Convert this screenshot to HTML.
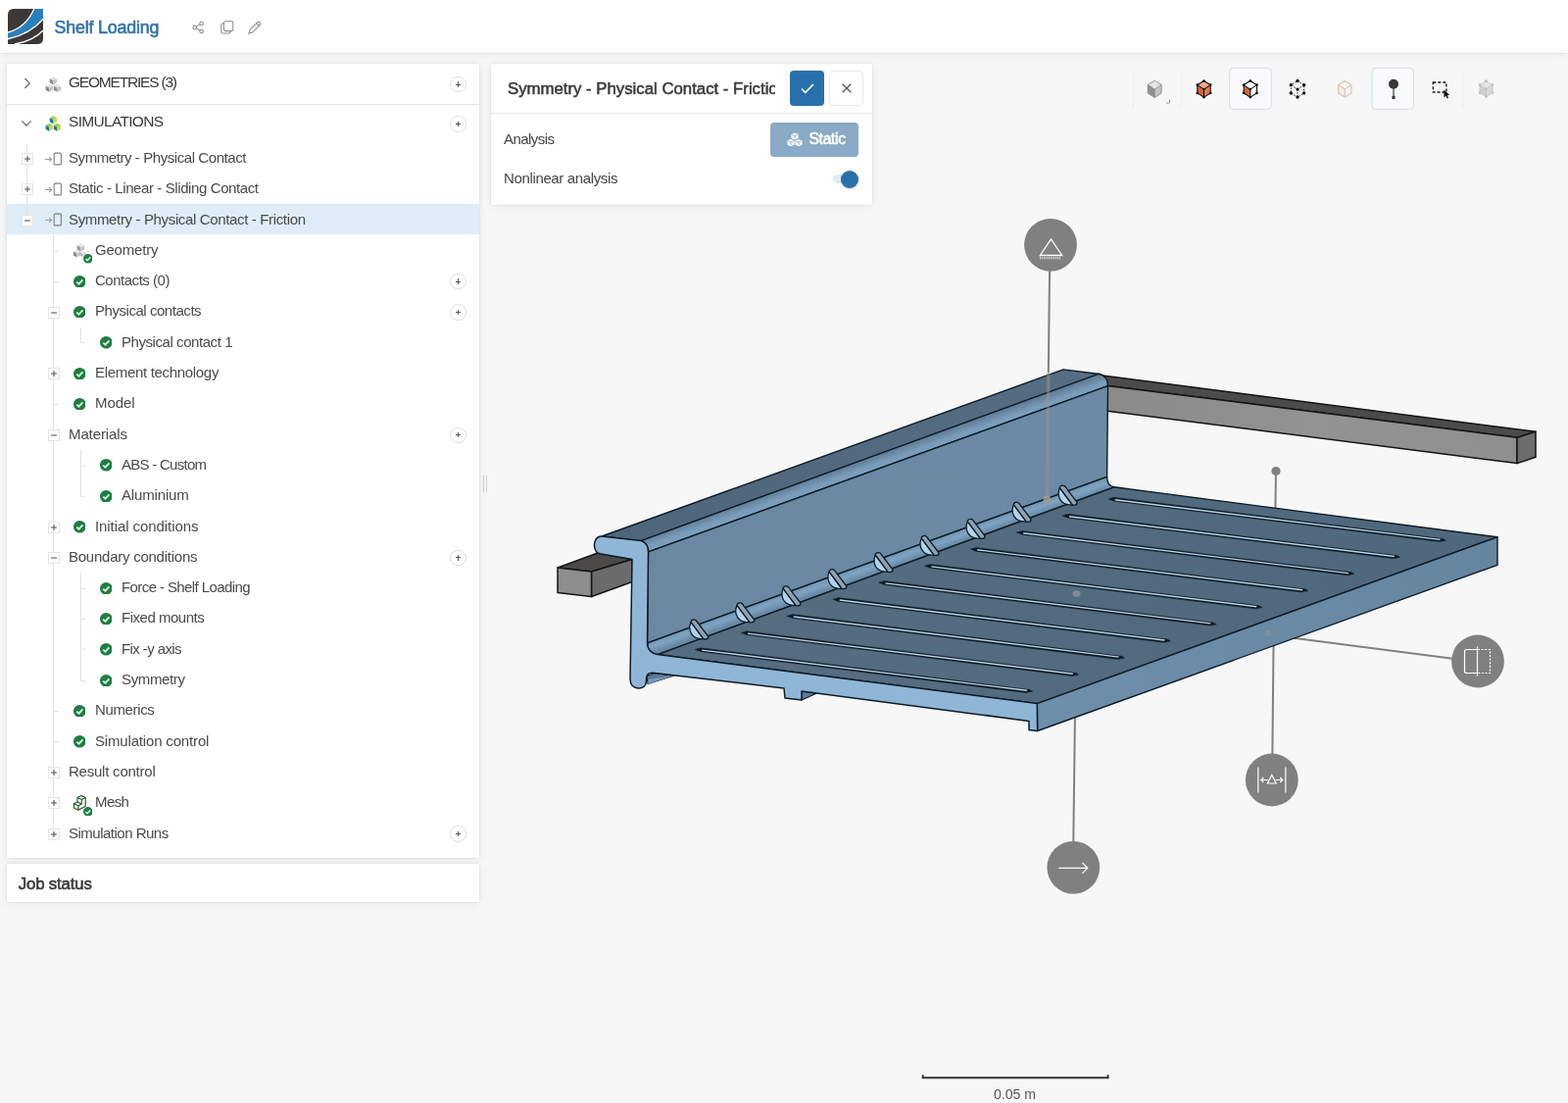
<!DOCTYPE html>
<html><head><meta charset="utf-8"><title>Shelf Loading</title>
<style>
html,body{margin:0;padding:0}
body{width:1600px;height:1125px;overflow:hidden;background:#f7f7f7;font-family:'Liberation Sans', sans-serif;position:relative}
.abs{position:absolute}
.panel{position:absolute;background:#fff;box-shadow:0 0 2px rgba(0,0,0,.13), 0 1px 10px rgba(0,0,0,.07)}
.plus{position:absolute;width:16.4px;height:16.4px;border:1px solid #dedede;border-radius:50%;background:#fff;box-sizing:border-box}
.plus:before{content:"";position:absolute;left:4.45px;top:6.6px;width:5.5px;height:1.2px;background:#555}
.plus:after{content:"";position:absolute;left:6.6px;top:4.45px;width:1.2px;height:5.5px;background:#555}
.exp{position:absolute;width:12px;height:12px;border:1px solid #e0e0e0;background:#fff;box-sizing:border-box;margin:-0.5px 0 0 -0.5px}
.exp:before{content:"";position:absolute;left:2.5px;top:4.25px;width:5px;height:1.5px;background:#555}
.exp.p:after{content:"";position:absolute;left:4.25px;top:2.5px;width:1.5px;height:5px;background:#555}
.tl{position:absolute;background:#e3e3e3}
</style></head>
<body>
<div id="app" style="position:absolute;left:0;top:0;width:1600px;height:1125px;will-change:transform">
<div class="abs" style="left:0;top:0;width:1600px;height:53.8px;background:#fff;box-shadow:0 0 2px rgba(0,0,0,.14), 0 1px 8px rgba(0,0,0,.07)"></div>
<svg class="abs" style="left:8.2px;top:9px" width="36" height="36" viewBox="0 0 36 36"><defs><clipPath id="lg"><path d="M6,0 H36 V30 Q36,36 30,36 H0 V6 Q0,0 6,0 Z"/></clipPath></defs><g clip-path="url(#lg)"><rect width="36" height="36" fill="#3b3836"/><path d="M0,24.6 C12,21.6 21.5,13.5 27.6,0 L36,0 L36,9.8 C27,20.5 14,27 0,30.2 Z" fill="#2a7fbf"/><path d="M0,24 C12,21 21,13 26.8,0" fill="none" stroke="#fff" stroke-width="1.3"/><path d="M0,30.8 C14,27.6 27,21 36,10.4" fill="none" stroke="#fff" stroke-width="1.4"/><path d="M7,36 C20,33.8 30,28.4 36,22" fill="none" stroke="#fff" stroke-width="1.3"/></g></svg>
<span style="position:absolute;left:55.6px;top:17.60px;line-height:20px;font-size:17.8px;font-weight:400;color:#3273a8;letter-spacing:-0.164px;white-space:pre;-webkit-text-stroke:0.6px #3273a8;">Shelf Loading</span>
<svg class="abs" style="left:196px;top:21.2px" width="13" height="14" viewBox="0 0 13 14" fill="none" stroke="#8a8a8a" stroke-width="1.05"><circle cx="2.8" cy="7" r="1.8"/><circle cx="9.6" cy="3" r="1.8"/><circle cx="9.6" cy="11" r="1.8"/><path d="M4.4 6.1 L8 3.9 M4.4 7.9 L8 10.1"/></svg><svg class="abs" style="left:224.6px;top:21.4px" width="14" height="14" viewBox="0 0 14 14" fill="none" stroke="#8a8a8a" stroke-width="1.05"><rect x="3.4" y="0.8" width="9.4" height="9.8" rx="1.6"/><path d="M3.4 3 H2.4 Q0.8 3 0.8 4.6 V11.4 Q0.8 13 2.4 13 H8.6 Q10 13 10.4 10.8"/></svg><svg class="abs" style="left:253.2px;top:21px" width="14" height="14" viewBox="0 0 14 14" fill="none" stroke="#8a8a8a" stroke-width="1.05"><path d="M1 13 L2 9.4 L9.8 1.6 Q10.8 0.6 11.8 1.6 L12.4 2.2 Q13.4 3.2 12.4 4.2 L4.6 12 Z"/><path d="M8.7 2.8 L11.2 5.3"/></svg>
<div class="panel" style="left:7px;top:65px;width:482.2px;height:810px"></div>
<div class="abs" style="left:7px;top:106px;width:482.2px;height:1px;background:#e6e6e6"></div>
<svg class="abs" style="left:23.6px;top:79.4px" width="8" height="12" viewBox="0 0 8 12" fill="none" stroke="#707070" stroke-width="1.3"><path d="M1.4 1 L6.2 6 L1.4 11"/></svg>
<svg class="abs" style="left:21.3px;top:121.7px" width="12" height="8" viewBox="0 0 12 8" fill="none" stroke="#707070" stroke-width="1.3"><path d="M1.4 1.4 L6 6.2 L10.6 1.4"/></svg>
<svg class="abs" style="left:45.6px;top:77.8px" width="17" height="17" viewBox="0 0 17 17"><polygon points="8.40,0.20 12.09,2.25 8.40,4.30 4.71,2.25" fill="#e3e3e5"/><polygon points="4.71,2.25 8.40,4.30 8.40,8.40 4.71,6.35" fill="#8e8e90"/><polygon points="8.40,4.30 12.09,2.25 12.09,6.35 8.40,8.40" fill="#c3c3c6"/><polygon points="4.30,7.70 7.99,9.75 4.30,11.80 0.61,9.75" fill="#e3e3e5"/><polygon points="0.61,9.75 4.30,11.80 4.30,15.90 0.61,13.85" fill="#8e8e90"/><polygon points="4.30,11.80 7.99,9.75 7.99,13.85 4.30,15.90" fill="#c3c3c6"/><polygon points="12.50,7.70 16.19,9.75 12.50,11.80 8.81,9.75" fill="#e3e3e5"/><polygon points="8.81,9.75 12.50,11.80 12.50,15.90 8.81,13.85" fill="#8e8e90"/><polygon points="12.50,11.80 16.19,9.75 16.19,13.85 12.50,15.90" fill="#c3c3c6"/></svg>
<svg class="abs" style="left:45.6px;top:117.6px" width="17" height="17" viewBox="0 0 17 17"><polygon points="8.40,0.20 12.09,2.25 8.40,4.30 4.71,2.25" fill="#9fd04a"/><polygon points="4.71,2.25 8.40,4.30 8.40,8.40 4.71,6.35" fill="#1f74a8"/><polygon points="8.40,4.30 12.09,2.25 12.09,6.35 8.40,8.40" fill="#cdd84c"/><polygon points="4.30,7.70 7.99,9.75 4.30,11.80 0.61,9.75" fill="#9fd04a"/><polygon points="0.61,9.75 4.30,11.80 4.30,15.90 0.61,13.85" fill="#1f74a8"/><polygon points="4.30,11.80 7.99,9.75 7.99,13.85 4.30,15.90" fill="#cdd84c"/><polygon points="12.50,7.70 16.19,9.75 12.50,11.80 8.81,9.75" fill="#9fd04a"/><polygon points="8.81,9.75 12.50,11.80 12.50,15.90 8.81,13.85" fill="#1f74a8"/><polygon points="12.50,11.80 16.19,9.75 16.19,13.85 12.50,15.90" fill="#cdd84c"/></svg>
<span style="position:absolute;left:70px;top:74.10px;line-height:20px;font-size:15.5px;font-weight:400;color:#383838;letter-spacing:-1.201px;white-space:pre;">GEOMETRIES (3)</span>
<span style="position:absolute;left:70px;top:114.10px;line-height:20px;font-size:15.5px;font-weight:400;color:#383838;letter-spacing:-0.692px;white-space:pre;">SIMULATIONS</span>
<div class="plus" style="left:459.20px;top:78.00px"></div>
<div class="plus" style="left:459.20px;top:118.20px"></div>
<div class="abs" style="left:7px;top:208.4px;width:482.2px;height:30.6px;background:#deedf7"></div>
<div class="tl" style="left:27.3px;top:147px;width:1px;height:72px"></div>
<div class="tl" style="left:54.3px;top:239px;width:1px;height:611px"></div>
<div class="tl" style="left:81.5px;top:333.8px;width:1px;height:16.6px"></div>
<div class="tl" style="left:81.5px;top:459.0px;width:1px;height:47.9px"></div>
<div class="tl" style="left:81.5px;top:584.1px;width:1px;height:110.6px"></div>
<svg class="abs" style="left:22.00px;top:156.00px" width="12" height="12" viewBox="0 0 12 12"><rect x="0.5" y="0.5" width="11" height="11" fill="#fff" stroke="#e5e5e5"/><path d="M3.1 6 H8.9" stroke="#505050" stroke-width="1.05"/><path d="M6 3.1 V8.9" stroke="#505050" stroke-width="1.05"/></svg>
<svg class="abs" style="left:44.5px;top:154.50px" width="20" height="14" viewBox="0 0 20 14" fill="none"><path d="M1 7.5 H7.5 M5.2 5.2 L7.6 7.5 L5.2 9.8" stroke="#9c9c9c" stroke-width="1.1"/><rect x="10.2" y="1.1" width="7.2" height="11.8" rx="1" stroke="#808080" stroke-width="1.1"/></svg>
<span style="position:absolute;left:70px;top:150.90px;line-height:20px;font-size:15px;font-weight:400;color:#4a4a4a;letter-spacing:-0.425px;white-space:pre;">Symmetry - Physical Contact</span>
<svg class="abs" style="left:22.00px;top:187.30px" width="12" height="12" viewBox="0 0 12 12"><rect x="0.5" y="0.5" width="11" height="11" fill="#fff" stroke="#e5e5e5"/><path d="M3.1 6 H8.9" stroke="#505050" stroke-width="1.05"/><path d="M6 3.1 V8.9" stroke="#505050" stroke-width="1.05"/></svg>
<svg class="abs" style="left:44.5px;top:185.80px" width="20" height="14" viewBox="0 0 20 14" fill="none"><path d="M1 7.5 H7.5 M5.2 5.2 L7.6 7.5 L5.2 9.8" stroke="#9c9c9c" stroke-width="1.1"/><rect x="10.2" y="1.1" width="7.2" height="11.8" rx="1" stroke="#808080" stroke-width="1.1"/></svg>
<span style="position:absolute;left:70px;top:182.20px;line-height:20px;font-size:15px;font-weight:400;color:#4a4a4a;letter-spacing:-0.399px;white-space:pre;">Static - Linear - Sliding Contact</span>
<svg class="abs" style="left:22.00px;top:218.60px" width="12" height="12" viewBox="0 0 12 12"><rect x="0.5" y="0.5" width="11" height="11" fill="#fff" stroke="#e5e5e5"/><path d="M3.1 6 H8.9" stroke="#505050" stroke-width="1.05"/></svg>
<svg class="abs" style="left:44.5px;top:217.10px" width="20" height="14" viewBox="0 0 20 14" fill="none"><path d="M1 7.5 H7.5 M5.2 5.2 L7.6 7.5 L5.2 9.8" stroke="#9c9c9c" stroke-width="1.1"/><rect x="10.2" y="1.1" width="7.2" height="11.8" rx="1" stroke="#808080" stroke-width="1.1"/></svg>
<span style="position:absolute;left:70px;top:213.50px;line-height:20px;font-size:15px;font-weight:400;color:#4a4a4a;letter-spacing:-0.353px;white-space:pre;">Symmetry - Physical Contact - Friction</span>
<div class="tl" style="left:55px;top:255.5px;width:5px;height:1px"></div>
<svg class="abs" style="left:74.20px;top:247.70px" width="14" height="16" viewBox="0 0 14 16"><polygon points="8.40,0.20 12.18,2.30 8.40,4.40 4.62,2.30" fill="#e6e6e8"/><polygon points="4.62,2.30 8.40,4.40 8.40,8.60 4.62,6.50" fill="#9a9a9d"/><polygon points="8.40,4.40 12.18,2.30 12.18,6.50 8.40,8.60" fill="#c6c6c9"/><polygon points="4.40,6.60 8.00,8.60 4.40,10.60 0.80,8.60" fill="#e6e6e8"/><polygon points="0.80,8.60 4.40,10.60 4.40,14.60 0.80,12.60" fill="#8c8c8f"/><polygon points="4.40,10.60 8.00,8.60 8.00,12.60 4.40,14.60" fill="#c9c9cc"/><polygon points="10.60,7.80 13.48,9.40 10.60,11.00 7.72,9.40" fill="#ececee"/><polygon points="7.72,9.40 10.60,11.00 10.60,14.20 7.72,12.60" fill="#b5b5b8"/><polygon points="10.60,11.00 13.48,9.40 13.48,12.60 10.60,14.20" fill="#d6d6d9"/></svg>
<svg class="abs" style="left:84.70px;top:259.10px" width="9.6" height="9.6" viewBox="0 0 14 14"><circle cx="7" cy="7" r="7" fill="#1f7d43"/><path d="M3.6 7.3 L6.1 9.7 L10.5 4.9" stroke="#d6f7df" stroke-width="2.1" fill="none"/></svg>
<span style="position:absolute;left:97px;top:244.80px;line-height:20px;font-size:15px;font-weight:400;color:#4a4a4a;letter-spacing:-0.194px;white-space:pre;">Geometry</span>
<div class="tl" style="left:55px;top:286.8px;width:5px;height:1px"></div>
<svg class="abs" style="left:74.70px;top:280.60px" width="12.6" height="12.6" viewBox="0 0 14 14"><circle cx="7" cy="7" r="7" fill="#1f7d43"/><path d="M3.6 7.3 L6.1 9.7 L10.5 4.9" stroke="#d6f7df" stroke-width="2.1" fill="none"/></svg>
<span style="position:absolute;left:97px;top:276.10px;line-height:20px;font-size:15px;font-weight:400;color:#4a4a4a;letter-spacing:-0.482px;white-space:pre;">Contacts (0)</span>
<div class="plus" style="left:459.20px;top:279.00px"></div>
<svg class="abs" style="left:49.00px;top:312.50px" width="12" height="12" viewBox="0 0 12 12"><rect x="0.5" y="0.5" width="11" height="11" fill="#fff" stroke="#e5e5e5"/><path d="M3.1 6 H8.9" stroke="#505050" stroke-width="1.05"/></svg>
<svg class="abs" style="left:74.70px;top:311.90px" width="12.6" height="12.6" viewBox="0 0 14 14"><circle cx="7" cy="7" r="7" fill="#1f7d43"/><path d="M3.6 7.3 L6.1 9.7 L10.5 4.9" stroke="#d6f7df" stroke-width="2.1" fill="none"/></svg>
<span style="position:absolute;left:97px;top:307.40px;line-height:20px;font-size:15px;font-weight:400;color:#4a4a4a;letter-spacing:-0.456px;white-space:pre;">Physical contacts</span>
<div class="plus" style="left:459.20px;top:310.30px"></div>
<div class="tl" style="left:82px;top:349.4px;width:5px;height:1px"></div>
<svg class="abs" style="left:101.50px;top:343.20px" width="12.6" height="12.6" viewBox="0 0 14 14"><circle cx="7" cy="7" r="7" fill="#1f7d43"/><path d="M3.6 7.3 L6.1 9.7 L10.5 4.9" stroke="#d6f7df" stroke-width="2.1" fill="none"/></svg>
<span style="position:absolute;left:124px;top:338.70px;line-height:20px;font-size:15px;font-weight:400;color:#4a4a4a;letter-spacing:-0.436px;white-space:pre;">Physical contact 1</span>
<svg class="abs" style="left:49.00px;top:375.10px" width="12" height="12" viewBox="0 0 12 12"><rect x="0.5" y="0.5" width="11" height="11" fill="#fff" stroke="#e5e5e5"/><path d="M3.1 6 H8.9" stroke="#505050" stroke-width="1.05"/><path d="M6 3.1 V8.9" stroke="#505050" stroke-width="1.05"/></svg>
<svg class="abs" style="left:74.70px;top:374.50px" width="12.6" height="12.6" viewBox="0 0 14 14"><circle cx="7" cy="7" r="7" fill="#1f7d43"/><path d="M3.6 7.3 L6.1 9.7 L10.5 4.9" stroke="#d6f7df" stroke-width="2.1" fill="none"/></svg>
<span style="position:absolute;left:97px;top:370.00px;line-height:20px;font-size:15px;font-weight:400;color:#4a4a4a;letter-spacing:-0.315px;white-space:pre;">Element technology</span>
<div class="tl" style="left:55px;top:412.0px;width:5px;height:1px"></div>
<svg class="abs" style="left:74.70px;top:405.80px" width="12.6" height="12.6" viewBox="0 0 14 14"><circle cx="7" cy="7" r="7" fill="#1f7d43"/><path d="M3.6 7.3 L6.1 9.7 L10.5 4.9" stroke="#d6f7df" stroke-width="2.1" fill="none"/></svg>
<span style="position:absolute;left:97px;top:401.30px;line-height:20px;font-size:15px;font-weight:400;color:#4a4a4a;letter-spacing:-0.090px;white-space:pre;">Model</span>
<svg class="abs" style="left:49.00px;top:437.70px" width="12" height="12" viewBox="0 0 12 12"><rect x="0.5" y="0.5" width="11" height="11" fill="#fff" stroke="#e5e5e5"/><path d="M3.1 6 H8.9" stroke="#505050" stroke-width="1.05"/></svg>
<span style="position:absolute;left:70px;top:432.60px;line-height:20px;font-size:15px;font-weight:400;color:#4a4a4a;letter-spacing:-0.107px;white-space:pre;">Materials</span>
<div class="plus" style="left:459.20px;top:435.50px"></div>
<div class="tl" style="left:82px;top:474.6px;width:5px;height:1px"></div>
<svg class="abs" style="left:101.50px;top:468.40px" width="12.6" height="12.6" viewBox="0 0 14 14"><circle cx="7" cy="7" r="7" fill="#1f7d43"/><path d="M3.6 7.3 L6.1 9.7 L10.5 4.9" stroke="#d6f7df" stroke-width="2.1" fill="none"/></svg>
<span style="position:absolute;left:124px;top:463.90px;line-height:20px;font-size:15px;font-weight:400;color:#4a4a4a;letter-spacing:-0.730px;white-space:pre;">ABS - Custom</span>
<div class="tl" style="left:82px;top:505.9px;width:5px;height:1px"></div>
<svg class="abs" style="left:101.50px;top:499.70px" width="12.6" height="12.6" viewBox="0 0 14 14"><circle cx="7" cy="7" r="7" fill="#1f7d43"/><path d="M3.6 7.3 L6.1 9.7 L10.5 4.9" stroke="#d6f7df" stroke-width="2.1" fill="none"/></svg>
<span style="position:absolute;left:124px;top:495.20px;line-height:20px;font-size:15px;font-weight:400;color:#4a4a4a;letter-spacing:-0.154px;white-space:pre;">Aluminium</span>
<svg class="abs" style="left:49.00px;top:531.60px" width="12" height="12" viewBox="0 0 12 12"><rect x="0.5" y="0.5" width="11" height="11" fill="#fff" stroke="#e5e5e5"/><path d="M3.1 6 H8.9" stroke="#505050" stroke-width="1.05"/><path d="M6 3.1 V8.9" stroke="#505050" stroke-width="1.05"/></svg>
<svg class="abs" style="left:74.70px;top:531.00px" width="12.6" height="12.6" viewBox="0 0 14 14"><circle cx="7" cy="7" r="7" fill="#1f7d43"/><path d="M3.6 7.3 L6.1 9.7 L10.5 4.9" stroke="#d6f7df" stroke-width="2.1" fill="none"/></svg>
<span style="position:absolute;left:97px;top:526.50px;line-height:20px;font-size:15px;font-weight:400;color:#4a4a4a;letter-spacing:-0.073px;white-space:pre;">Initial conditions</span>
<svg class="abs" style="left:49.00px;top:562.90px" width="12" height="12" viewBox="0 0 12 12"><rect x="0.5" y="0.5" width="11" height="11" fill="#fff" stroke="#e5e5e5"/><path d="M3.1 6 H8.9" stroke="#505050" stroke-width="1.05"/></svg>
<span style="position:absolute;left:70px;top:557.80px;line-height:20px;font-size:15px;font-weight:400;color:#4a4a4a;letter-spacing:-0.247px;white-space:pre;">Boundary conditions</span>
<div class="plus" style="left:459.20px;top:560.70px"></div>
<div class="tl" style="left:82px;top:599.8px;width:5px;height:1px"></div>
<svg class="abs" style="left:101.50px;top:593.60px" width="12.6" height="12.6" viewBox="0 0 14 14"><circle cx="7" cy="7" r="7" fill="#1f7d43"/><path d="M3.6 7.3 L6.1 9.7 L10.5 4.9" stroke="#d6f7df" stroke-width="2.1" fill="none"/></svg>
<span style="position:absolute;left:124px;top:589.10px;line-height:20px;font-size:15px;font-weight:400;color:#4a4a4a;letter-spacing:-0.591px;white-space:pre;">Force - Shelf Loading</span>
<div class="tl" style="left:82px;top:631.1px;width:5px;height:1px"></div>
<svg class="abs" style="left:101.50px;top:624.90px" width="12.6" height="12.6" viewBox="0 0 14 14"><circle cx="7" cy="7" r="7" fill="#1f7d43"/><path d="M3.6 7.3 L6.1 9.7 L10.5 4.9" stroke="#d6f7df" stroke-width="2.1" fill="none"/></svg>
<span style="position:absolute;left:124px;top:620.40px;line-height:20px;font-size:15px;font-weight:400;color:#4a4a4a;letter-spacing:-0.477px;white-space:pre;">Fixed mounts</span>
<div class="tl" style="left:82px;top:662.4px;width:5px;height:1px"></div>
<svg class="abs" style="left:101.50px;top:656.20px" width="12.6" height="12.6" viewBox="0 0 14 14"><circle cx="7" cy="7" r="7" fill="#1f7d43"/><path d="M3.6 7.3 L6.1 9.7 L10.5 4.9" stroke="#d6f7df" stroke-width="2.1" fill="none"/></svg>
<span style="position:absolute;left:124px;top:651.70px;line-height:20px;font-size:15px;font-weight:400;color:#4a4a4a;letter-spacing:-0.590px;white-space:pre;">Fix -y axis</span>
<div class="tl" style="left:82px;top:693.7px;width:5px;height:1px"></div>
<svg class="abs" style="left:101.50px;top:687.50px" width="12.6" height="12.6" viewBox="0 0 14 14"><circle cx="7" cy="7" r="7" fill="#1f7d43"/><path d="M3.6 7.3 L6.1 9.7 L10.5 4.9" stroke="#d6f7df" stroke-width="2.1" fill="none"/></svg>
<span style="position:absolute;left:124px;top:683.00px;line-height:20px;font-size:15px;font-weight:400;color:#4a4a4a;letter-spacing:-0.357px;white-space:pre;">Symmetry</span>
<div class="tl" style="left:55px;top:725.0px;width:5px;height:1px"></div>
<svg class="abs" style="left:74.70px;top:718.80px" width="12.6" height="12.6" viewBox="0 0 14 14"><circle cx="7" cy="7" r="7" fill="#1f7d43"/><path d="M3.6 7.3 L6.1 9.7 L10.5 4.9" stroke="#d6f7df" stroke-width="2.1" fill="none"/></svg>
<span style="position:absolute;left:97px;top:714.30px;line-height:20px;font-size:15px;font-weight:400;color:#4a4a4a;letter-spacing:-0.363px;white-space:pre;">Numerics</span>
<div class="tl" style="left:55px;top:756.3px;width:5px;height:1px"></div>
<svg class="abs" style="left:74.70px;top:750.10px" width="12.6" height="12.6" viewBox="0 0 14 14"><circle cx="7" cy="7" r="7" fill="#1f7d43"/><path d="M3.6 7.3 L6.1 9.7 L10.5 4.9" stroke="#d6f7df" stroke-width="2.1" fill="none"/></svg>
<span style="position:absolute;left:97px;top:745.60px;line-height:20px;font-size:15px;font-weight:400;color:#4a4a4a;letter-spacing:-0.167px;white-space:pre;">Simulation control</span>
<svg class="abs" style="left:49.00px;top:782.00px" width="12" height="12" viewBox="0 0 12 12"><rect x="0.5" y="0.5" width="11" height="11" fill="#fff" stroke="#e5e5e5"/><path d="M3.1 6 H8.9" stroke="#505050" stroke-width="1.05"/><path d="M6 3.1 V8.9" stroke="#505050" stroke-width="1.05"/></svg>
<span style="position:absolute;left:70px;top:776.90px;line-height:20px;font-size:15px;font-weight:400;color:#4a4a4a;letter-spacing:-0.225px;white-space:pre;">Result control</span>
<svg class="abs" style="left:49.00px;top:813.30px" width="12" height="12" viewBox="0 0 12 12"><rect x="0.5" y="0.5" width="11" height="11" fill="#fff" stroke="#e5e5e5"/><path d="M3.1 6 H8.9" stroke="#505050" stroke-width="1.05"/><path d="M6 3.1 V8.9" stroke="#505050" stroke-width="1.05"/></svg>
<svg class="abs" style="left:74.20px;top:811.10px" width="15" height="17" viewBox="0 0 15 17" fill="none" stroke="#1c5a2e" stroke-width="1.15" stroke-linejoin="round"><path d="M9,0.6 L13.2,2.6 L13.2,11.2 L5.9,15.2 L1.4,13 L1.4,8.8 L5,7 L5,2.6 Z" fill="#fff"/><path d="M5,2.6 L9.3,4.6 L13.2,2.6 M9.3,4.6 L9.3,9 L5.9,10.9 L1.4,8.8 M5.9,10.9 L5.9,15.2 M5,7 L9.3,9"/></svg>
<svg class="abs" style="left:84.70px;top:822.70px" width="9.6" height="9.6" viewBox="0 0 14 14"><circle cx="7" cy="7" r="7" fill="#1f7d43"/><path d="M3.6 7.3 L6.1 9.7 L10.5 4.9" stroke="#d6f7df" stroke-width="2.1" fill="none"/></svg>
<span style="position:absolute;left:97px;top:808.20px;line-height:20px;font-size:15px;font-weight:400;color:#4a4a4a;letter-spacing:-0.596px;white-space:pre;">Mesh</span>
<svg class="abs" style="left:49.00px;top:844.60px" width="12" height="12" viewBox="0 0 12 12"><rect x="0.5" y="0.5" width="11" height="11" fill="#fff" stroke="#e5e5e5"/><path d="M3.1 6 H8.9" stroke="#505050" stroke-width="1.05"/><path d="M6 3.1 V8.9" stroke="#505050" stroke-width="1.05"/></svg>
<span style="position:absolute;left:70px;top:839.50px;line-height:20px;font-size:15px;font-weight:400;color:#4a4a4a;letter-spacing:-0.501px;white-space:pre;">Simulation Runs</span>
<div class="plus" style="left:459.20px;top:842.40px"></div>
<div class="abs" style="left:493px;top:485px;width:1px;height:17px;background:#cfcfcf"></div><div class="abs" style="left:495.5px;top:485px;width:1px;height:17px;background:#cfcfcf"></div>
<div class="panel" style="left:7px;top:881px;width:482.2px;height:39px"></div>
<span style="position:absolute;left:18.8px;top:892.20px;line-height:20px;font-size:16.8px;font-weight:400;color:#3a3a3a;letter-spacing:-0.167px;white-space:pre;-webkit-text-stroke:0.6px #3a3a3a;">Job status</span>
<div class="panel" style="left:500.6px;top:65px;width:389.4px;height:144px"></div>
<div class="abs" style="left:500.6px;top:115px;width:389.4px;height:1px;background:#e8e8e8"></div>
<div class="abs" style="left:518px;top:76px;width:272.6px;height:30px;overflow:hidden"><span style="position:absolute;left:0px;top:5.20px;line-height:20px;font-size:16.8px;font-weight:400;color:#3a3a3a;letter-spacing:-0.009px;white-space:pre;-webkit-text-stroke:0.55px #3a3a3a;">Symmetry - Physical Contact - Friction</span></div>
<div class="abs" style="left:806px;top:72px;width:35px;height:36px;border-radius:4px;background:#2871ac"></div>
<svg class="abs" style="left:816.5px;top:84.5px" width="14" height="11" viewBox="0 0 14 11" fill="none" stroke="#fff" stroke-width="1.6"><path d="M1 5.6 L4.8 9.4 L13 1"/></svg>
<div class="abs" style="left:845.8px;top:72px;width:35.4px;height:36px;border-radius:4px;background:#fff;border:1px solid #e8e8e8;box-sizing:border-box"></div>
<svg class="abs" style="left:858.5px;top:85px" width="10" height="10" viewBox="0 0 10 10" fill="none" stroke="#555" stroke-width="1.3"><path d="M0.7 0.7 L9.3 9.3 M9.3 0.7 L0.7 9.3"/></svg>
<span style="position:absolute;left:514px;top:132.00px;line-height:20px;font-size:15px;font-weight:400;color:#444;letter-spacing:-0.551px;white-space:pre;">Analysis</span>
<span style="position:absolute;left:514px;top:172.00px;line-height:20px;font-size:15px;font-weight:400;color:#444;letter-spacing:-0.358px;white-space:pre;">Nonlinear analysis</span>
<div class="abs" style="left:786px;top:125px;width:90px;height:35px;border-radius:4px;background:#8aaac7"></div>
<svg class="abs" style="left:802.5px;top:135px" width="16" height="15" viewBox="0 0 16 15" fill="#fff"><path d="M8 0.5 L11.6 2 L11.6 6 L8 7.6 L4.4 6 L4.4 2 Z"/><path d="M4 7 L7.6 8.5 L7.6 12.5 L4 14.2 L0.4 12.5 L0.4 8.5 Z"/><path d="M12 7 L15.6 8.5 L15.6 12.5 L12 14.2 L8.4 12.5 L8.4 8.5 Z"/><path d="M8 3.6 L8 6.5 M4 10.2 L4 13 M12 10.2 L12 13" stroke="#8aaac7" stroke-width=".9"/><path d="M5.3 2.4 L8 3.6 L10.7 2.4 M1.3 9 L4 10.2 L6.7 9 M9.3 9 L12 10.2 L14.7 9" stroke="#8aaac7" stroke-width=".9" fill="none"/></svg>
<span style="position:absolute;left:825.5px;top:132.00px;line-height:20px;font-size:15.6px;font-weight:400;color:#fff;letter-spacing:-0.300px;white-space:pre;-webkit-text-stroke:0.6px #fff;">Static</span>
<div class="abs" style="left:850px;top:178px;width:26px;height:9px;border-radius:5px;background:#e0ebf3"></div>
<div class="abs" style="left:858px;top:173.6px;width:18px;height:18px;border-radius:50%;background:#2871ac;box-shadow:0 1px 2px rgba(0,0,0,.2)"></div>
<svg class="abs" style="left:1140px;top:60px" width="460" height="62" viewBox="1140 60 460 62"><line x1="1156.5" y1="72" x2="1156.5" y2="110" stroke="#ededed" stroke-width="1"/><line x1="1205" y1="72" x2="1205" y2="110" stroke="#ededed" stroke-width="1"/><line x1="1493" y1="72" x2="1493" y2="110" stroke="#ededed" stroke-width="1"/><rect x="1254.7" y="69.3" width="42.5" height="42.2" rx="4" fill="#f9fafb" stroke="#cfdfec" stroke-width="1"/><rect x="1400" y="69.3" width="42.5" height="42.2" rx="4" fill="#f9fafb" stroke="#cfdfec" stroke-width="1"/><polygon points="1178.20,82.16 1185.13,86.48 1178.20,91.10 1171.27,86.48" fill="#e6e6e6"/><polygon points="1171.27,86.48 1178.20,91.10 1178.20,99.44 1171.27,95.12" fill="#8f8f8f"/><polygon points="1178.20,91.10 1185.13,86.48 1185.13,95.12 1178.20,99.44" fill="#c2c2c2"/><polygon points="1178.20,82.16 1185.13,86.48 1185.13,95.12 1178.20,99.44 1171.27,95.12 1171.27,86.48" fill="none" stroke="#7d7d7d" stroke-width="0.8"/><path d="M1178.20 91.10 L1171.27 86.48 M1178.20 91.10 L1185.13 86.48 M1178.20 91.10 L1178.20 99.44" stroke="#7d7d7d" stroke-width="0.8" fill="none"/><path d="M1193.5 101.5 V105 H1190" stroke="#9a9a9a" stroke-width="1" fill="none"/><polygon points="1228.50,82.48 1235.17,86.64 1228.50,91.10 1221.83,86.64" fill="#f0a98a"/><polygon points="1221.83,86.64 1228.50,91.10 1228.50,99.12 1221.83,94.96" fill="#d9623a"/><polygon points="1228.50,91.10 1235.17,86.64 1235.17,94.96 1228.50,99.12" fill="#e27a52"/><polygon points="1228.50,82.48 1235.17,86.64 1235.17,94.96 1228.50,99.12 1221.83,94.96 1221.83,86.64" fill="none" stroke="#111" stroke-width="1.1"/><path d="M1228.50 91.10 L1221.83 86.64 M1228.50 91.10 L1235.17 86.64 M1228.50 91.10 L1228.50 99.12" stroke="#111" stroke-width="1.1" fill="none"/><circle cx="1228.50" cy="82.48" r="1.35" fill="#111"/><circle cx="1235.17" cy="86.64" r="1.35" fill="#111"/><circle cx="1235.17" cy="94.96" r="1.35" fill="#111"/><circle cx="1228.50" cy="99.12" r="1.35" fill="#111"/><circle cx="1221.83" cy="94.96" r="1.35" fill="#111"/><circle cx="1221.83" cy="86.64" r="1.35" fill="#111"/><circle cx="1228.50" cy="91.10" r="1.35" fill="#111"/><polygon points="1275.80,82.48 1282.47,86.64 1275.80,91.10 1269.13,86.64" fill="#ffffff"/><polygon points="1269.13,86.64 1275.80,91.10 1275.80,99.12 1269.13,94.96" fill="#d9623a"/><polygon points="1275.80,91.10 1282.47,86.64 1282.47,94.96 1275.80,99.12" fill="#ffffff"/><polygon points="1275.80,82.48 1282.47,86.64 1282.47,94.96 1275.80,99.12 1269.13,94.96 1269.13,86.64" fill="none" stroke="#111" stroke-width="1.1"/><path d="M1275.80 91.10 L1269.13 86.64 M1275.80 91.10 L1282.47 86.64 M1275.80 91.10 L1275.80 99.12" stroke="#111" stroke-width="1.1" fill="none"/><circle cx="1275.80" cy="82.48" r="1.35" fill="#111"/><circle cx="1282.47" cy="86.64" r="1.35" fill="#111"/><circle cx="1282.47" cy="94.96" r="1.35" fill="#111"/><circle cx="1275.80" cy="99.12" r="1.35" fill="#111"/><circle cx="1269.13" cy="94.96" r="1.35" fill="#111"/><circle cx="1269.13" cy="86.64" r="1.35" fill="#111"/><circle cx="1275.80" cy="91.10" r="1.35" fill="#111"/><polygon points="1324.00,82.48 1330.67,86.64 1330.67,94.96 1324.00,99.12 1317.33,94.96 1317.33,86.64" fill="none" stroke="#111" stroke-width="1" stroke-dasharray="1.5 1.5"/><path d="M1324.00 91.10 L1317.33 86.64 M1324.00 91.10 L1330.67 86.64 M1324.00 91.10 L1324.00 99.12" stroke="#111" stroke-width="1" stroke-dasharray="1.5 1.5" fill="none"/><circle cx="1324.00" cy="82.48" r="1.7" fill="#111"/><circle cx="1330.67" cy="86.64" r="1.7" fill="#111"/><circle cx="1330.67" cy="94.96" r="1.7" fill="#111"/><circle cx="1324.00" cy="99.12" r="1.7" fill="#111"/><circle cx="1317.33" cy="94.96" r="1.7" fill="#111"/><circle cx="1317.33" cy="86.64" r="1.7" fill="#111"/><circle cx="1324.00" cy="91.10" r="1.7" fill="#111"/><polygon points="1372.30,82.48 1378.97,86.64 1372.30,91.10 1365.63,86.64" fill="#fbf6f3"/><polygon points="1365.63,86.64 1372.30,91.10 1372.30,99.12 1365.63,94.96" fill="#f6ece7"/><polygon points="1372.30,91.10 1378.97,86.64 1378.97,94.96 1372.30,99.12" fill="#fbf6f3"/><polygon points="1372.30,82.48 1378.97,86.64 1378.97,94.96 1372.30,99.12 1365.63,94.96 1365.63,86.64" fill="none" stroke="#dcc3b8" stroke-width="1.2"/><path d="M1372.30 91.10 L1365.63 86.64 M1372.30 91.10 L1378.97 86.64 M1372.30 91.10 L1372.30 99.12" stroke="#dcc3b8" stroke-width="1.2" fill="none"/><circle cx="1422" cy="85.7" r="5" fill="#3a3a3a"/><line x1="1422" y1="88" x2="1422" y2="99" stroke="#3a3a3a" stroke-width="1.2"/><rect x="1420.4" y="97.8" width="3.2" height="3.2" fill="#3a3a3a"/><rect x="1462.3" y="84" width="13.6" height="10" fill="none" stroke="#111" stroke-width="1.3" stroke-dasharray="3 2"/><path d="M1473.4 91.6 L1473.4 99.6 L1475.4 97.8 L1476.8 100.4 L1478 99.8 L1476.8 97.2 L1479.2 97 Z" fill="#111"/><polygon points="1516.50,82.61 1522.91,86.60 1516.50,90.90 1510.09,86.60" fill="#e6e6e6"/><polygon points="1510.09,86.60 1516.50,90.90 1516.50,98.59 1510.09,94.60" fill="#cfcfcf"/><polygon points="1516.50,90.90 1522.91,86.60 1522.91,94.60 1516.50,98.59" fill="#dadada"/><polygon points="1516.50,82.61 1522.91,86.60 1522.91,94.60 1516.50,98.59 1510.09,94.60 1510.09,86.60" fill="none" stroke="#bdbdbd" stroke-width="0.8"/><path d="M1516.50 90.90 L1510.09 86.60 M1516.50 90.90 L1522.91 86.60 M1516.50 90.90 L1516.50 98.59" stroke="#bdbdbd" stroke-width="0.8" fill="none"/><circle cx="1516.50" cy="82.61" r="1.35" fill="#bdbdbd"/><circle cx="1522.91" cy="86.60" r="1.35" fill="#bdbdbd"/><circle cx="1522.91" cy="94.60" r="1.35" fill="#bdbdbd"/><circle cx="1516.50" cy="98.59" r="1.35" fill="#bdbdbd"/><circle cx="1510.09" cy="94.60" r="1.35" fill="#bdbdbd"/><circle cx="1510.09" cy="86.60" r="1.35" fill="#bdbdbd"/><circle cx="1516.50" cy="90.90" r="1.35" fill="#bdbdbd"/></svg>
<svg class="abs" style="left:0;top:0" width="1600" height="1125" viewBox="0 0 1600 1125">
<defs>
<linearGradient id="gTop" x1="0" y1="0" x2="1" y2="0"><stop offset="0" stop-color="#4e667b"/><stop offset="1" stop-color="#566e84"/></linearGradient>
<linearGradient id="gWall" x1="0" y1="0" x2="1" y2="0"><stop offset="0" stop-color="#6b88a2"/><stop offset="1" stop-color="#6c8aa6"/></linearGradient>
<linearGradient id="gShelf" gradientUnits="userSpaceOnUse" x1="700" y1="560" x2="1450" y2="650"><stop offset="0" stop-color="#566d82"/><stop offset="1" stop-color="#50687d"/></linearGradient>
<linearGradient id="gSide" gradientUnits="userSpaceOnUse" x1="1060" y1="730" x2="1528" y2="560"><stop offset="0" stop-color="#6e8fac"/><stop offset="1" stop-color="#66859f"/></linearGradient>
<linearGradient id="gCh" gradientUnits="userSpaceOnUse" x1="900" y1="462" x2="904.3" y2="474" spreadMethod="pad"><stop offset="0" stop-color="#5f7c96"/><stop offset="0.7" stop-color="#7a9cba"/><stop offset="1" stop-color="#7c9fbd"/></linearGradient>
<linearGradient id="gFi" gradientUnits="userSpaceOnUse" x1="900" y1="568" x2="904.5" y2="580.5" spreadMethod="pad"><stop offset="0" stop-color="#6f90ad"/><stop offset="0.5" stop-color="#7fa3c2"/><stop offset="1" stop-color="#6888a4"/></linearGradient>
<linearGradient id="gBar" x1="0" y1="0" x2="1" y2="0"><stop offset="0" stop-color="#8a8a8a"/><stop offset="0.5" stop-color="#939393"/><stop offset="1" stop-color="#8f8f8f"/></linearGradient>
</defs>
<polygon points="1123.0,382.8 1567.0,440.3 1548.0,446.3 1130.0,393.4" fill="#4b4b4b" stroke="#141414" stroke-width="1.5" stroke-linejoin="round"/>
<polygon points="1130.0,393.4 1548.0,446.3 1548.0,472.6 1130.0,419.2" fill="url(#gBar)" stroke="#141414" stroke-width="1.5" stroke-linejoin="round"/>
<polygon points="1548.0,446.3 1567.0,440.3 1567.0,466.2 1548.0,472.6" fill="#6d6d6d" stroke="#141414" stroke-width="1.5" stroke-linejoin="round"/>
<polygon points="569.0,579.0 610.0,564.0 645.0,570.5 603.5,583.0" fill="#4c4a49" stroke="#141414" stroke-width="1.5" stroke-linejoin="round"/>
<polygon points="603.5,583.0 645.0,570.5 645.0,593.5 603.5,608.5" fill="#6c6c6c" stroke="#141414" stroke-width="1.5" stroke-linejoin="round"/>
<polygon points="569.0,579.0 603.5,583.0 603.5,608.5 569.0,604.5" fill="#8e8e8e" stroke="#141414" stroke-width="1.5" stroke-linejoin="round"/>
<line x1="1302" y1="480" x2="1301.4" y2="519" stroke="#808080" stroke-width="2"/><circle cx="1302" cy="480.5" r="4.6" fill="#808080"/>
<line x1="1490" y1="672.7" x2="1318" y2="650.5" stroke="#808080" stroke-width="2"/>
<line x1="1298.3" y1="776" x2="1299.6" y2="650" stroke="#808080" stroke-width="2"/>
<line x1="1095.2" y1="865" x2="1097" y2="725" stroke="#808080" stroke-width="2"/>
<polygon points="660.0,689.5 668.0,686.5 688.0,689.0 661.0,697.5" fill="#5d7a94" stroke="#0d1b26" stroke-width="1.1" stroke-linejoin="round"/>
<polygon points="662.0,693.0 688.0,689.0 661.0,697.5" fill="#7b9bb8"/>
<polygon points="818.0,705.0 833.0,707.2 818.0,714.0" fill="#5b7a96" stroke="#0d1b26" stroke-width="1.1" stroke-linejoin="round"/>
<path d="M614,547 L1085,376.9 L1120,381.2 L1123,381.8 L654,551.6 Z" fill="url(#gTop)" stroke="#0d1b26" stroke-width="1.4" stroke-linejoin="round"/>
<path d="M654,551.6 L1121,381.3 C1127,382.5 1130.5,386.5 1130.5,393.6 L661.5,562.9 C661.5,557 659,553 654,551.6 Z" fill="url(#gCh)" stroke="#0d1b26" stroke-width="1.4" stroke-linejoin="round"/>
<path d="M661.5,562.9 L1130.5,393.6 L1129.6,486.4 L660.5,655.8 Z" fill="url(#gWall)" stroke="#0d1b26" stroke-width="1.4" stroke-linejoin="round"/>
<path d="M660.5,655.8 L1129.6,486.4 C1129.6,492 1132,496 1137,496.8 L671,667.6 C664.5,666.6 660.5,662 660.5,655.8 Z" fill="url(#gFi)" stroke="#0d1b26" stroke-width="1.4" stroke-linejoin="round"/>
<polygon points="671.0,667.6 1137.0,496.8 1528.0,547.8 1058.3,717.6" fill="url(#gShelf)" stroke="#0d1b26" stroke-width="1.4" stroke-linejoin="round"/>
<polygon points="1058.3,717.6 1528.0,547.8 1528.0,576.3 1058.6,745.5" fill="url(#gSide)" stroke="#0d1b26" stroke-width="1.4" stroke-linejoin="round"/>
<path d="M1130.8,509.0 L1136.8,507.3 L1472.6,549.4 L1475.6,551.3 L1468.6,552.6 L1136.8,511.2 Z" fill="#0c1a28" stroke="#0c1a28" stroke-width="0.4" stroke-linejoin="round"/>
<line x1="1137.8" y1="509.7" x2="1469.6" y2="550.4" stroke="#c0d4e6" stroke-width="1.4"/>
<path d="M1084.0,526.0 L1090.0,524.3 L1425.8,566.5 L1428.8,568.4 L1421.8,569.7 L1090.0,528.3 Z" fill="#0c1a28" stroke="#0c1a28" stroke-width="0.4" stroke-linejoin="round"/>
<line x1="1091.0" y1="526.7" x2="1422.8" y2="567.5" stroke="#c0d4e6" stroke-width="1.4"/>
<path d="M1037.1,543.1 L1043.1,541.4 L1378.9,583.6 L1381.9,585.5 L1374.9,586.8 L1043.1,545.3 Z" fill="#0c1a28" stroke="#0c1a28" stroke-width="0.4" stroke-linejoin="round"/>
<line x1="1044.1" y1="543.8" x2="1375.9" y2="584.6" stroke="#c0d4e6" stroke-width="1.4"/>
<path d="M990.2,560.1 L996.2,558.4 L1332.0,600.7 L1335.0,602.6 L1328.0,603.9 L996.2,562.4 Z" fill="#0c1a28" stroke="#0c1a28" stroke-width="0.4" stroke-linejoin="round"/>
<line x1="997.2" y1="560.8" x2="1329.0" y2="601.7" stroke="#c0d4e6" stroke-width="1.4"/>
<path d="M943.4,577.2 L949.4,575.5 L1285.2,617.8 L1288.2,619.7 L1281.2,621.0 L949.4,579.4 Z" fill="#0c1a28" stroke="#0c1a28" stroke-width="0.4" stroke-linejoin="round"/>
<line x1="950.4" y1="577.9" x2="1282.2" y2="618.8" stroke="#c0d4e6" stroke-width="1.4"/>
<path d="M896.5,594.2 L902.5,592.5 L1238.3,634.9 L1241.3,636.9 L1234.3,638.1 L902.5,596.5 Z" fill="#0c1a28" stroke="#0c1a28" stroke-width="0.4" stroke-linejoin="round"/>
<line x1="903.5" y1="594.9" x2="1235.3" y2="635.9" stroke="#c0d4e6" stroke-width="1.4"/>
<path d="M849.7,611.3 L855.7,609.6 L1191.5,652.1 L1194.5,654.0 L1187.5,655.3 L855.7,613.5 Z" fill="#0c1a28" stroke="#0c1a28" stroke-width="0.4" stroke-linejoin="round"/>
<line x1="856.7" y1="612.0" x2="1188.5" y2="653.0" stroke="#c0d4e6" stroke-width="1.4"/>
<path d="M802.8,628.4 L808.8,626.6 L1144.6,669.2 L1147.6,671.1 L1140.6,672.4 L808.8,630.6 Z" fill="#0c1a28" stroke="#0c1a28" stroke-width="0.4" stroke-linejoin="round"/>
<line x1="809.8" y1="629.0" x2="1141.6" y2="670.1" stroke="#c0d4e6" stroke-width="1.4"/>
<path d="M756.0,645.4 L762.0,643.7 L1097.8,686.3 L1100.8,688.2 L1093.8,689.5 L762.0,647.6 Z" fill="#0c1a28" stroke="#0c1a28" stroke-width="0.4" stroke-linejoin="round"/>
<line x1="763.0" y1="646.1" x2="1094.8" y2="687.2" stroke="#c0d4e6" stroke-width="1.4"/>
<path d="M709.1,662.5 L715.1,660.8 L1050.9,703.4 L1053.9,705.3 L1046.9,706.6 L715.1,664.7 Z" fill="#0c1a28" stroke="#0c1a28" stroke-width="0.4" stroke-linejoin="round"/>
<line x1="716.1" y1="663.1" x2="1047.9" y2="704.3" stroke="#c0d4e6" stroke-width="1.4"/>
<g transform="translate(1089.6,505.2)"><path d="M-8.2,-7.6 C-10.8,-2 -9.2,4 -5.5,7 C-3,9 1,9.8 4.8,9.8 Z" fill="#b4d1ea" stroke="#0d1b26" stroke-width="1.3" stroke-linejoin="round"/><path d="M-8.2,-7.6 C-8.2,-9.4 -6,-10.6 -4,-9.8 L-2.8,-9 L9.6,7.4 C9.6,9 8,10 6.5,10 L4.8,9.8 Z" fill="#8fa2b4" stroke="#0d1b26" stroke-width="1.3" stroke-linejoin="round"/></g>
<g transform="translate(1042.5,522.3)"><path d="M-8.2,-7.6 C-10.8,-2 -9.2,4 -5.5,7 C-3,9 1,9.8 4.8,9.8 Z" fill="#b4d1ea" stroke="#0d1b26" stroke-width="1.3" stroke-linejoin="round"/><path d="M-8.2,-7.6 C-8.2,-9.4 -6,-10.6 -4,-9.8 L-2.8,-9 L9.6,7.4 C9.6,9 8,10 6.5,10 L4.8,9.8 Z" fill="#8fa2b4" stroke="#0d1b26" stroke-width="1.3" stroke-linejoin="round"/></g>
<g transform="translate(995.5,539.4)"><path d="M-8.2,-7.6 C-10.8,-2 -9.2,4 -5.5,7 C-3,9 1,9.8 4.8,9.8 Z" fill="#b4d1ea" stroke="#0d1b26" stroke-width="1.3" stroke-linejoin="round"/><path d="M-8.2,-7.6 C-8.2,-9.4 -6,-10.6 -4,-9.8 L-2.8,-9 L9.6,7.4 C9.6,9 8,10 6.5,10 L4.8,9.8 Z" fill="#8fa2b4" stroke="#0d1b26" stroke-width="1.3" stroke-linejoin="round"/></g>
<g transform="translate(948.4,556.5)"><path d="M-8.2,-7.6 C-10.8,-2 -9.2,4 -5.5,7 C-3,9 1,9.8 4.8,9.8 Z" fill="#b4d1ea" stroke="#0d1b26" stroke-width="1.3" stroke-linejoin="round"/><path d="M-8.2,-7.6 C-8.2,-9.4 -6,-10.6 -4,-9.8 L-2.8,-9 L9.6,7.4 C9.6,9 8,10 6.5,10 L4.8,9.8 Z" fill="#8fa2b4" stroke="#0d1b26" stroke-width="1.3" stroke-linejoin="round"/></g>
<g transform="translate(901.4,573.6)"><path d="M-8.2,-7.6 C-10.8,-2 -9.2,4 -5.5,7 C-3,9 1,9.8 4.8,9.8 Z" fill="#b4d1ea" stroke="#0d1b26" stroke-width="1.3" stroke-linejoin="round"/><path d="M-8.2,-7.6 C-8.2,-9.4 -6,-10.6 -4,-9.8 L-2.8,-9 L9.6,7.4 C9.6,9 8,10 6.5,10 L4.8,9.8 Z" fill="#8fa2b4" stroke="#0d1b26" stroke-width="1.3" stroke-linejoin="round"/></g>
<g transform="translate(854.3,590.7)"><path d="M-8.2,-7.6 C-10.8,-2 -9.2,4 -5.5,7 C-3,9 1,9.8 4.8,9.8 Z" fill="#b4d1ea" stroke="#0d1b26" stroke-width="1.3" stroke-linejoin="round"/><path d="M-8.2,-7.6 C-8.2,-9.4 -6,-10.6 -4,-9.8 L-2.8,-9 L9.6,7.4 C9.6,9 8,10 6.5,10 L4.8,9.8 Z" fill="#8fa2b4" stroke="#0d1b26" stroke-width="1.3" stroke-linejoin="round"/></g>
<g transform="translate(807.3,607.8)"><path d="M-8.2,-7.6 C-10.8,-2 -9.2,4 -5.5,7 C-3,9 1,9.8 4.8,9.8 Z" fill="#b4d1ea" stroke="#0d1b26" stroke-width="1.3" stroke-linejoin="round"/><path d="M-8.2,-7.6 C-8.2,-9.4 -6,-10.6 -4,-9.8 L-2.8,-9 L9.6,7.4 C9.6,9 8,10 6.5,10 L4.8,9.8 Z" fill="#8fa2b4" stroke="#0d1b26" stroke-width="1.3" stroke-linejoin="round"/></g>
<g transform="translate(760.2,624.9)"><path d="M-8.2,-7.6 C-10.8,-2 -9.2,4 -5.5,7 C-3,9 1,9.8 4.8,9.8 Z" fill="#b4d1ea" stroke="#0d1b26" stroke-width="1.3" stroke-linejoin="round"/><path d="M-8.2,-7.6 C-8.2,-9.4 -6,-10.6 -4,-9.8 L-2.8,-9 L9.6,7.4 C9.6,9 8,10 6.5,10 L4.8,9.8 Z" fill="#8fa2b4" stroke="#0d1b26" stroke-width="1.3" stroke-linejoin="round"/></g>
<g transform="translate(713.2,642.0)"><path d="M-8.2,-7.6 C-10.8,-2 -9.2,4 -5.5,7 C-3,9 1,9.8 4.8,9.8 Z" fill="#b4d1ea" stroke="#0d1b26" stroke-width="1.3" stroke-linejoin="round"/><path d="M-8.2,-7.6 C-8.2,-9.4 -6,-10.6 -4,-9.8 L-2.8,-9 L9.6,7.4 C9.6,9 8,10 6.5,10 L4.8,9.8 Z" fill="#8fa2b4" stroke="#0d1b26" stroke-width="1.3" stroke-linejoin="round"/></g>
<path d="M614,547 C609,546.6 606,552 606.5,557 C607,561.5 608.5,564 612,564.8 L645,570.5 L643,692.5 C643,698.4 646.5,701.9 651.6,701.9 C656.6,701.9 659.4,698.8 659.4,695 L659.6,691.6 C659.8,688.3 662,686 666,686.2 L800,702 L801,712 L818,714 L818,705 L1050,735.4 L1050,744.4 L1058.6,745.5 L1058.3,717.6 L671,667.6 C664.5,666.6 660.5,662 660.5,655.8 L661.5,562.9 C661.5,557 659,553 654,551.6 Z" fill="#90b6d7" stroke="#0d1b26" stroke-width="1.5" stroke-linejoin="round"/>
<line x1="1071.1" y1="270" x2="1069.8" y2="380" stroke="#808080" stroke-width="2"/>
<line x1="1069.8" y1="380" x2="1068.4" y2="508" stroke="#a0958f" stroke-width="4.2" opacity=".3"/><line x1="1069.8" y1="380" x2="1068.4" y2="508" stroke="#a0958f" stroke-width="1.8" opacity=".35"/><rect x="1064.6" y="505.6" width="7.2" height="7.6" rx="2.2" fill="#a59a91" opacity=".85"/>
<ellipse cx="1098.5" cy="605.5" rx="4" ry="3.2" fill="#8d9398" opacity=".8"/>
<ellipse cx="1294" cy="646" rx="3.5" ry="3" fill="#8d9398" opacity=".6"/>
<circle cx="1072" cy="249.8" r="26.9" fill="#808080"/><g transform="translate(1072,249.8)" fill="none" stroke="#fff" stroke-width="1.2"><path d="M0.5,-5.8 L11.7,10.7 L-10.7,10.7 Z" stroke-width="1.3"/><path d="M-11,13.4 H10" stroke-dasharray="1.2 1" stroke-width="2" opacity=".8"/></g>
<circle cx="1508" cy="674.5" r="26.9" fill="#808080"/><g transform="translate(1508,674.5)" fill="none" stroke="#fff" stroke-width="1.2"><path d="M-1,-12 H-11.5 Q-13.5,-12 -13.5,-10 V10 Q-13.5,12 -11.5,12 H-1" /><path d="M-0.5,-15 V15"/><path d="M0,-12 H12.5 V12 H0" stroke-dasharray="2 1.6"/></g>
<circle cx="1297.8" cy="795.5" r="26.9" fill="#808080"/><g transform="translate(1297.8,795.5)" fill="none" stroke="#fff" stroke-width="1.2"><path d="M-14,-13 V13 M14,-13 V13"/><path d="M-11,0 H-4 M4,0 H11 M-8.5,-2.5 L-11,0 L-8.5,2.5 M8.5,-2.5 L11,0 L8.5,2.5"/><path d="M0,-5 L4.5,3.5 H-4.5 Z"/></g>
<circle cx="1095.3" cy="884.8" r="26.9" fill="#808080"/><g transform="translate(1095.3,884.8)" fill="none" stroke="#fff" stroke-width="1.2"><path d="M-15,0.5 H14.5 M9,-5 L14.5,0.5 L9,6"/></g>
<path d="M941.7,1096.3 V1099.3 H1130.6 V1096.3" fill="none" stroke="#333" stroke-width="2"/>
<text x="1035.5" y="1120.5" text-anchor="middle" font-family="'Liberation Sans', sans-serif" font-size="14" fill="#555" textLength="43" lengthAdjust="spacingAndGlyphs">0.05 m</text>
</svg>
</div>
</body></html>
